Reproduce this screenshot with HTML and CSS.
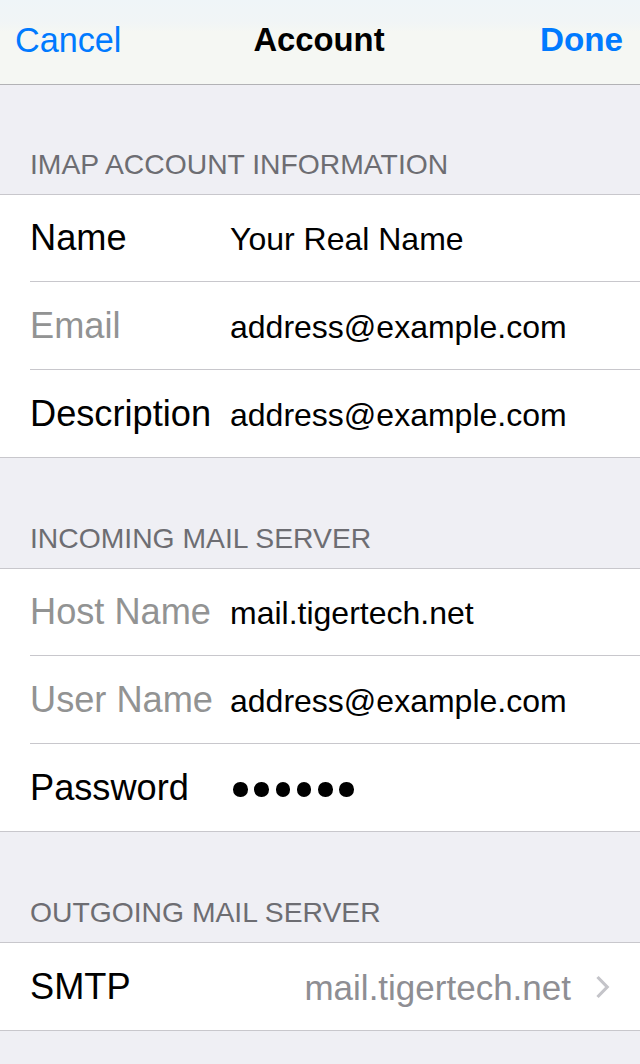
FILE: index.html
```html
<!DOCTYPE html>
<html lang="en">
<head>
<meta charset="utf-8">
<title>Account</title>
<link rel="stylesheet" href="styles.css">
</head>
<body>
<header class="nav">
  <span class="nav-btn nav-left">Cancel</span>
  <span class="nav-title">Account</span>
  <span class="nav-btn nav-right">Done</span>
</header>

<section class="section">
  <h2 class="section-head first">IMAP ACCOUNT INFORMATION</h2>
  <div class="group">
    <div class="row"><span class="label">Name</span><span class="value">Your Real Name</span></div>
    <div class="row"><span class="label muted">Email</span><span class="value">address@example.com</span></div>
    <div class="row"><span class="label">Description</span><span class="value">address@example.com</span></div>
  </div>
</section>

<section class="section">
  <h2 class="section-head">INCOMING MAIL SERVER</h2>
  <div class="group">
    <div class="row"><span class="label muted">Host Name</span><span class="value">mail.tigertech.net</span></div>
    <div class="row"><span class="label muted">User Name</span><span class="value">address@example.com</span></div>
    <div class="row"><span class="label">Password</span><span class="value dots"><i></i><i></i><i></i><i></i><i></i><i></i></span></div>
  </div>
</section>

<section class="section">
  <h2 class="section-head">OUTGOING MAIL SERVER</h2>
  <div class="group">
    <div class="row row-link">
      <span class="label">SMTP</span>
      <span class="detail">mail.tigertech.net</span>
      <svg class="chevron" width="15" height="24" viewBox="0 0 15 24" aria-hidden="true"><path d="M2.5 2 L12.2 12 L2.5 22" fill="none" stroke="#c4c4c9" stroke-width="3.2"/></svg>
    </div>
  </div>
</section>
</body>
</html>
```

FILE: styles.css
```css
html, body {
  margin: 0;
  padding: 0;
}
body {
  background: #efeff4;
  font-family: "Liberation Sans", Arial, sans-serif;
  color: #000;
  width: 640px;
  min-height: 1064px;
}

.nav {
  height: 85px;
  box-sizing: border-box;
  padding: 0 17px 4px 15px;
  display: grid;
  grid-template-columns: 1fr auto 1fr;
  align-items: center;
  background: linear-gradient(to bottom, #eff5f8 0px, #f1f5f6 22px, #f5f7f3 32px, #f5f7f3 100%);
  border-bottom: 1px solid #b2b2b5;
}
.nav-btn {
  color: #007aff;
  font-size: 34.2px;
}
.nav-left { justify-self: start; }
.nav-right {
  justify-self: end;
  font-weight: bold;
  font-size: 33.2px;
}
.nav-title {
  font-weight: bold;
  font-size: 32.8px;
}

.section-head {
  margin: 0;
  height: 110px;
  box-sizing: border-box;
  padding: 0 0 14px 30px;
  display: flex;
  align-items: flex-end;
  font-size: 28.3px;
  font-weight: normal;
  line-height: 32px;
  color: #6d6d72;
}
.section-head.first {
  height: 109px;
}

.group {
  background: #fff;
  border-top: 1px solid #c8c7cc;
  border-bottom: 1px solid #c8c7cc;
  padding-left: 30px;
}
.row {
  height: 88px;
  box-sizing: border-box;
  display: flex;
  align-items: center;
  border-bottom: 1px solid #c8c7cc;
}
.row:first-child {
  height: 87px;
}
.row:last-child {
  border-bottom: none;
  height: 87px;
}
.label {
  width: 200px;
  flex: none;
  font-size: 36.2px;
  line-height: 86px;
  white-space: nowrap;
}
.label.muted {
  color: #929393;
}
.value {
  font-size: 32px;
  line-height: 86px;
  white-space: nowrap;
  padding-top: 2px;
}

.dots {
  display: flex;
  gap: 6.8px;
  margin-left: 3px;
  padding-top: 4px;
}
.dots i {
  width: 14.5px;
  height: 14.5px;
  border-radius: 50%;
  background: #000;
}

.row-link {
  padding-right: 30px;
}
.detail {
  margin-left: auto;
  font-size: 35px;
  color: #8e8e93;
  white-space: nowrap;
  padding-top: 2px;
}
.chevron {
  margin-left: 24px;
  flex: none;
}
```
